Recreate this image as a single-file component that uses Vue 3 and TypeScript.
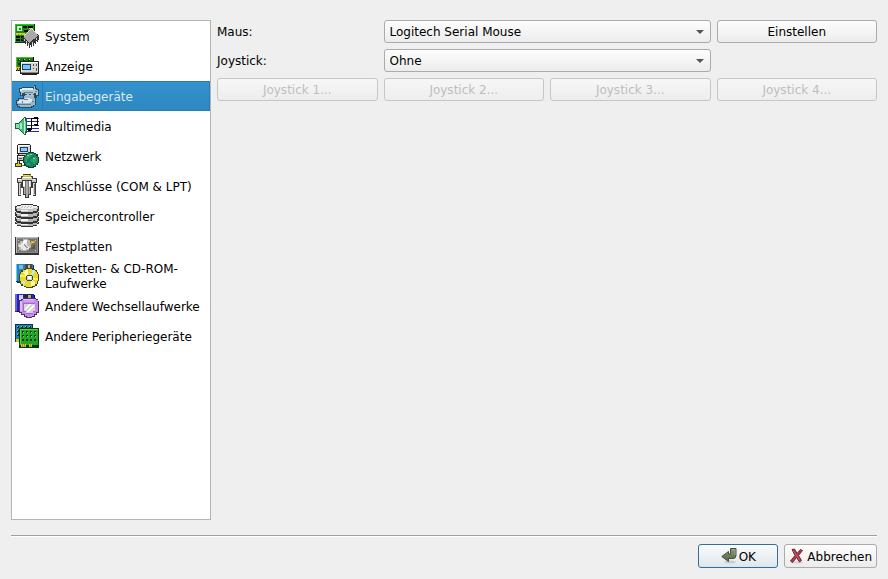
<script setup lang="ts">
import { ref } from 'vue'

interface Shape {
  d: string
  fill?: string
  stroke?: string
  width?: number
}

interface Category {
  name: string
  shapes: Shape[]
}

const categories: Category[] = [
  {
    name: 'System',
    shapes: [
      { d: 'M0 0H20V19H0Z', fill: '#073d07' },
      { d: 'M0 0H19V18H0Z', fill: '#149014' },
      { d: 'M0 0H19V1H1V18H0Z', fill: '#27c927' },
      { d: 'M8 2H12V4H8ZM13 2H18V4H13ZM9 6H13V8H9ZM1 12H5V14H1ZM6 12H10V14H6ZM1 15H5V17H1ZM6 15H10V17H6Z', fill: '#000' },
      { d: 'M2 2H7V7H2Z', fill: '#d4e6d4' },
      { d: 'M4 4H6V6H4Z', fill: '#149014' },
      { d: 'M1 9H10V11H1ZM14 4H18V5H14Z', fill: '#e5c51c' },
      { d: 'M3 10H4V11H3ZM6 10H7V11H6Z', fill: '#c87b00' },
      { d: 'M7 13L16 4L24 12V16L15 21L7 16Z', fill: '#333' },
      { d: 'M8 13L16 5L23 12L14 19Z', fill: '#a9a9a9' },
      { d: 'M8.5 12.5L16.5 4.5L22.5 10.5', stroke: '#dedede' },
      { d: 'M8.5 15V18M10.5 16V20M12.5 18V22M14.5 19V24M16.5 18V23M18.5 17V22M20.5 15V20M22.5 13V18', stroke: '#333' },
      { d: 'M9.5 15V17M11.5 17V19M13.5 19V21M17.5 18V20M21.5 14V16', stroke: '#ccc' },
    ],
  },
  {
    name: 'Anzeige',
    shapes: [
      { d: 'M1 3H19V17H1Z', fill: '#000' },
      { d: 'M1 3H18V15H1Z', fill: '#13821a' },
      { d: 'M1 3H18V4H2V15H1Z', fill: '#5cb92f' },
      { d: 'M3 5H5V7H3ZM8 5H10V7H8ZM13 5H15V7H13ZM3 9H5V11H3Z', fill: '#0b3b0b' },
      { d: 'M4 5H5V6H4ZM9 5H10V6H9ZM14 5H15V6H14Z', fill: '#c7dd70' },
      { d: 'M1 13H6V16H1Z', fill: '#e1ca24' },
      { d: 'M2 14V17M4 14V17', stroke: '#5c5600' },
      { d: 'M5 7H24V20H22V21H7V20H5Z', fill: '#222' },
      { d: 'M6 8H23V18H6Z', fill: '#d5d6d0' },
      { d: 'M6 8H23V9H7V18H6Z', fill: '#fff' },
      { d: 'M7 10H16V16H7Z', fill: '#17436a' },
      { d: 'M8 11H15V15H8Z', fill: '#78c5ff' },
      { d: 'M18 10H19V12H18ZM21 10H22V12H21ZM18 14H19V15H18ZM21 14H22V17H21Z', fill: '#555' },
      { d: 'M6 18H23V19H6Z', fill: '#888' },
    ],
  },
  {
    name: 'Eingabegeräte',
    shapes: [
      { d: 'M4 4H7V3H19V1H21V4H22V5H24V12H22V14H21V21H19V23H17V24H4V23H2V21H1V16H3V14H8V12H5V9H4Z', fill: '#2b4a5e' },
      { d: 'M5 5H19V2H20V5H21V6H23V11H21V9H19V12H10V9H7V11H6V8H5Z', fill: '#a8c4d1' },
      { d: 'M7 4H18V6H7ZM5 5H7V7H5Z', fill: '#e3eff2' },
      { d: 'M9 8H18V9H9ZM20 7H22V8H20Z', fill: '#6a8799' },
      { d: 'M9 12H19V14H20V21H18V22H16V23H5V22H3V20H2V17H4V15H9Z', fill: '#9bb9c8' },
      { d: 'M4 16H10V14H15V15H17V18H15V19H3V17H4Z', fill: '#dbe8ec' },
      { d: 'M9 15H13V16H9ZM7 17H8V19H7ZM3 20H16V21H3ZM17 17H19V18H17Z', fill: '#617f92' },
      { d: 'M10 10H12V11H10ZM14 10H16V11H14ZM18 10H19V11H18Z', fill: '#3b596b' },
    ],
  },
  {
    name: 'Multimedia',
    shapes: [
      { d: 'M11 4.5H24M11 7.5H24M11 11.5H24M11 14.5H24M11 17.5H24', stroke: '#2824c8' },
      { d: 'M0 9H3L9 3H11V5H12V19H11V21H9L3 15H0Z', fill: '#17643b' },
      { d: 'M1 10H4V14H1Z', fill: '#84e4ac' },
      { d: 'M4 9L9 4V20L4 15Z', fill: '#40bd78' },
      { d: 'M5 9H7V15H5Z', fill: '#a9efc6' },
      { d: 'M9 4H10V20H9Z', fill: '#d9ece0' },
      { d: 'M10 7H11V17H10Z', fill: '#68cc93' },
      { d: 'M16 4H19V3H23V12H20V11H19V10H22V5H17V16H16V17H13V16H12V15H13V14H16Z', fill: '#000' },
    ],
  },
  {
    name: 'Netzwerk',
    shapes: [
      { d: 'M3 0H15V1H16V10H15V11H14V17H2V11H3V10H2V1H3Z', fill: '#222' },
      { d: 'M3 1H15V9H3Z', fill: '#d8d8d0' },
      { d: 'M3 1H15V2H4V9H3Z', fill: '#fff' },
      { d: 'M5 3H13V8H5Z', fill: '#17436a' },
      { d: 'M6 4H12V7H6Z', fill: '#8fcbfa' },
      { d: 'M4 10H13V11H4ZM3 12H13V16H3Z', fill: '#c6c6bf' },
      { d: 'M3 12H12V13H3Z', fill: '#fff' },
      { d: 'M4 14H7V15H4Z', fill: '#555' },
      { d: 'M2 17H5V19H7V23H0V19H2Z', fill: '#333' },
      { d: 'M1 20H6V22H1ZM3 17H4V20H3Z', fill: '#d6ca22' },
      { d: 'M7 21H11V22H7Z', fill: '#777' },
      { d: 'M13 8H19V9H21V10H23V13H24V19H23V21H21V23H19V24H13V23H11V22H9V19H8V13H9V11H11V9H13Z', fill: '#123e2c' },
      { d: 'M13 9H19V10H21V12H22V13H23V19H22V21H20V22H18V23H14V22H11V20H10V18H9V13H10V11H12V10H13Z', fill: '#15806c' },
      { d: 'M12 10H18V11H16V13H14V15H12V18H10V14H11V12H12ZM18 13H21V14H22V18H20V20H18V18H16V15H18ZM12 19H15V21H12Z', fill: '#25a55a' },
      { d: 'M12 11H14V12H12ZM18 14H20V15H18ZM15 10H17V11H15Z', fill: '#8bd98c' },
    ],
  },
  {
    name: 'Anschlüsse (COM & LPT)',
    shapes: [
      { d: 'M8 0H16V2H18V4H22V9H21V22H18V14H16V21H14V24H10V21H8V14H6V22H3V9H2V4H6V2H8Z', fill: '#3b3b3b' },
      { d: 'M8 1H16V3H8Z', fill: '#c7b928' },
      { d: 'M9 1H14V2H9Z', fill: '#eee24b' },
      { d: 'M3 5H7V3H17V5H21V8H17V6H7V8H3Z', fill: '#c8c8c1' },
      { d: 'M8 3H16V4H8ZM3 5H6V6H3ZM18 5H20V6H18Z', fill: '#fff' },
      { d: 'M4 9H6V21H4ZM18 9H20V21H18ZM8 7H16V13H8Z', fill: '#d8d8d2' },
      { d: 'M9 13H11V20H9ZM13 13H15V20H13ZM11 7H13V23H11Z', fill: '#aeaea8' },
      { d: 'M10 7H11V20H10ZM13 7H14V20H13ZM5 10H6V20H5ZM19 10H20V20H19Z', fill: '#777' },
      { d: 'M8 7H10V12H8ZM14 7H15V12H14Z', fill: '#fff' },
    ],
  },
  {
    name: 'Speichercontroller',
    shapes: [
      { d: 'M6 0H18V1H22V2H24V20H22V22H18V23H6V22H2V20H0V2H2V1H6Z', fill: '#333' },
      { d: 'M6 1H18V2H22V3H23V5H22V7H18V8H6V7H2V5H1V3H2V2H6Z', fill: '#c4c4c4' },
      { d: 'M1 8H2V9H6V10H18V9H22V8H23V10H22V12H18V13H6V12H2V10H1ZM1 13H2V14H6V15H18V14H22V13H23V15H22V17H18V18H6V17H2V15H1ZM1 18H2V19H6V20H18V19H22V18H23V19H22V21H18V22H6V21H2V19H1Z', fill: '#b4b4b4' },
      { d: 'M6 1H18V2H22V4H18V5H6V4H2V2H6Z', fill: '#eee' },
      { d: 'M6 10H13V12H6ZM6 15H13V17H6ZM6 20H13V21H6ZM6 6H13V7H6ZM2 9H4V10H2ZM2 14H4V15H2Z', fill: '#f4f4f4' },
      { d: 'M7 2H8V3H7ZM10 2H11V3H10ZM13 2H14V3H13ZM16 2H17V3H16ZM6 3H7V4H6ZM9 3H10V4H9ZM12 3H13V4H12ZM15 3H16V4H15Z', fill: '#bbb' },
      { d: 'M0 7H1V8H0ZM23 7H24V8H23ZM0 12H1V13H0ZM23 12H24V13H23ZM0 17H1V18H0ZM23 17H24V18H23Z', fill: '#fff' },
    ],
  },
  {
    name: 'Festplatten',
    shapes: [
      { d: 'M0 3H24V21H0Z', fill: '#333' },
      { d: 'M1 3H23V19H1Z', fill: '#8d8d87' },
      { d: 'M1 3H23V4H2V19H1Z', fill: '#bbb' },
      { d: 'M2 5H22V18H2Z', fill: '#77736f' },
      { d: 'M8 5H13V6H15V8H16V14H14V16H12V17H6V16H4V13H3V9H5V7H8Z', fill: '#b8b9b6' },
      { d: 'M4 11H6V9H9V8H12V12H14V15H11V16H8V15H6V13H4Z', fill: '#e9e9e8' },
      { d: 'M9 6H12V8H10V9H8V7H9Z', fill: '#fff' },
      { d: 'M9 10H10V11H11V12H12V13H13V14H11V13H10V12H9Z', fill: '#999' },
      { d: 'M15 8H16V7H20V9H17V10H15Z', fill: '#dba42b' },
      { d: 'M17 8H18V9H17Z', fill: '#ffe176' },
      { d: 'M3 6H4V7H3ZM20 6H21V7H20ZM3 16H4V17H3ZM20 16H21V17H20Z', fill: '#cacac3' },
      { d: 'M18 11H20V15H16V13H18Z', fill: '#5d5853' },
    ],
  },
  {
    name: 'Disketten- & CD-ROM-Laufwerke',
    shapes: [
      { d: 'M1 1H19V19H2V18H1Z', fill: '#12395c' },
      { d: 'M1 0H18V17H1Z', fill: '#2385bb' },
      { d: 'M1 0H2V17H1Z', fill: '#66cdf0' },
      { d: 'M4 1H8V5H4Z', fill: '#7fb6d0' },
      { d: 'M10 0H17V5H10Z', fill: '#494949' },
      { d: 'M13 1H15V4H13Z', fill: '#b9b9b9' },
      { d: 'M11 4H18V5H20V6H22V8H23V10H24V17H23V20H22V22H20V23H18V24H11V23H9V22H6V20H5V18H4V10H5V8H6V6H9V5H11Z', fill: '#4b4510' },
      { d: 'M11 5H17V6H20V7H21V8H22V10H23V17H22V20H20V22H17V23H11V22H8V20H6V17H5V10H6V8H8V6H11Z', fill: '#e5d92c' },
      { d: 'M8 8H10V6H13V11H12V12H11ZM17 16L21 19H20V21H18V22H16V17Z', fill: '#fffbb5' },
      { d: 'M17 6H19V7H20V8L17 12H16ZM6 18L11 16L9 21H8V19H6Z', fill: '#bdeaf0' },
      { d: 'M5 11H11V13H5ZM18 14H23V16H18Z', fill: '#f8f25c' },
      { d: 'M12 11H17V12H18V16H17V17H12V16H11V12H12Z', fill: '#444' },
      { d: 'M12 12H17V16H12Z', fill: '#d1d1d1' },
      { d: 'M13 12H16V15H13Z', fill: '#fff' },
    ],
  },
  {
    name: 'Andere Wechsellaufwerke',
    shapes: [
      { d: 'M1 1H20V18H1Z', fill: '#080850' },
      { d: 'M0 0H19V17H2V18H0Z', fill: '#2523c8' },
      { d: 'M0 0H2V17H0Z', fill: '#6864e0' },
      { d: 'M4 1H8V6H4Z', fill: '#d4d4fc' },
      { d: 'M9 0H17V5H9Z', fill: '#282834' },
      { d: 'M13 1H16V4H13Z', fill: '#aaa' },
      { d: 'M8 4H21V5H23V7H24V19H22V21H20V23H17V24H11V23H9V21H6V19H4V7H6V5H8Z', fill: '#513169' },
      { d: 'M8 5H21V6H23V18H21V20H19V22H17V23H12V22H10V20H7V18H5V7H7V6H8Z', fill: '#c58bea' },
      { d: 'M5 7H7V17H5ZM8 5H19V6H8Z', fill: '#e3bdf9' },
      { d: 'M8 9H20V18H18V20H11V18H8Z', fill: '#a569c8' },
      { d: 'M9 10H20V17H18V19H11V17H9Z', fill: '#d5d5d5' },
      { d: 'M10 14L14 10H16L10 16ZM11 18L19 10V12L13 18Z', fill: '#fff' },
      { d: 'M9 6H19V8H9Z', fill: '#d3a0f0' },
    ],
  },
  {
    name: 'Andere Peripheriegeräte',
    shapes: [
      { d: 'M0 0H18V18H0Z', fill: '#073851' },
      { d: 'M1 1H17V16H1Z', fill: '#1b84b3' },
      { d: 'M2 2H4V4H2ZM6 2H8V4H6ZM10 2H12V4H10ZM14 2H16V4H14ZM2 6H4V8H2ZM2 10H4V12H2Z', fill: '#042c3d' },
      { d: 'M2 2H3V3H2ZM6 2H7V3H6ZM10 2H11V3H10ZM14 2H15V3H14ZM2 6H3V7H2ZM2 10H3V11H2Z', fill: '#69c9e5' },
      { d: 'M1 15H5V18H1Z', fill: '#dfbd2c' },
      { d: 'M4 4H24V24H4Z', fill: '#083b0b' },
      { d: 'M5 5H23V21H5Z', fill: '#22a626' },
      { d: 'M5 5H23V6H6V21H5Z', fill: '#5fd32d' },
      { d: 'M7 7H9V9H7ZM11 7H13V9H11ZM15 7H17V9H15ZM19 7H21V9H19ZM7 11H9V13H7ZM11 11H13V13H11ZM15 11H17V13H15ZM19 11H21V13H19ZM7 15H9V17H7ZM11 15H13V17H11ZM15 15H17V17H15ZM19 15H21V17H19Z', fill: '#053f08' },
      { d: 'M8 8H9V9H8ZM12 8H13V9H12ZM16 8H17V9H16ZM20 8H21V9H20ZM8 12H9V13H8ZM12 12H13V13H12ZM16 12H17V13H16ZM20 12H21V13H20Z', fill: '#99c69b' },
      { d: 'M6 20H11V23H6ZM14 20H17V23H14Z', fill: '#dfbd2c' },
      { d: 'M7.5 20V23M9.5 20V23M15.5 20V23', stroke: '#8f9614' },
    ],
  },
]

const current = ref('Eingabegeräte')
const mouse = ref('Logitech Serial Mouse')
const joystick = ref('Ohne')
</script>

<template>
  <form class="dialog" @submit.prevent>
    <div class="content">
      <nav class="categories">
        <button
          v-for="category in categories"
          :key="category.name"
          type="button"
          class="category"
          :class="{ selected: category.name === current }"
          :aria-current="category.name === current ? 'page' : undefined"
          @click="current = category.name"
        >
          <svg class="category-icon" viewBox="0 0 24 24" shape-rendering="crispEdges" aria-hidden="true">
            <path
              v-for="(shape, i) in category.shapes"
              :key="i"
              :d="shape.d"
              :fill="shape.fill ?? 'none'"
              :stroke="shape.stroke ?? 'none'"
              :stroke-width="shape.width ?? 1"
            />
          </svg>
          <span class="category-name">{{ category.name }}</span>
        </button>
      </nav>

      <section class="settings">
        <label for="mouse">Maus:</label>
        <div class="combo">
          <select id="mouse" v-model="mouse">
            <option>Logitech Serial Mouse</option>
          </select>
        </div>
        <button type="button" class="control">Einstellen</button>

        <label for="joystick" class="row-start">Joystick:</label>
        <div class="combo">
          <select id="joystick" v-model="joystick">
            <option>Ohne</option>
          </select>
        </div>

        <button
          v-for="n in 4"
          :key="n"
          type="button"
          class="control"
          :class="{ 'row-start': n === 1 }"
          disabled
        >
          Joystick {{ n }}...
        </button>
      </section>
    </div>

    <footer class="actions">
      <button type="submit" class="control action default">
        <svg class="action-icon" viewBox="0 0 16 16" aria-hidden="true">
          <defs>
            <linearGradient id="ok-fill" x1="0" y1="0" x2="0" y2="1">
              <stop offset="0" stop-color="#8b9a7c" />
              <stop offset="1" stop-color="#566349" />
            </linearGradient>
          </defs>
          <ellipse cx="9" cy="14" rx="6" ry="1.5" fill="#000" opacity=".13" />
          <path d="M9.500 .5H15V7.500Q15 10.500 12 10.500H7.500V13.500L.8 8.500L7.500 3.500V6H9.500Z" fill="url(#ok-fill)" stroke="#43503a" stroke-linejoin="round" />
          <path d="M10.500 1.500H14V7" fill="none" stroke="#a6b19a" opacity=".7" />
        </svg>
        <span>OK</span>
      </button>
      <button type="button" class="control action">
        <svg class="action-icon" viewBox="0 0 16 16" aria-hidden="true">
          <ellipse cx="8" cy="14.500" rx="6" ry="1" fill="#000" opacity=".12" />
          <path d="M3 1.500L5.500 1L8 5.500L11.500 1.500L13.500 2.500L9.500 7.500L12.500 12.500L10.500 14L7.500 9.500L3.500 14.500L1.500 13L6 7.500Z" fill="#b23c48" stroke="#6d2530" stroke-linejoin="round" />
          <path d="M4 2.500L11 12.500" stroke="#d37b82" opacity=".6" />
        </svg>
        <span>Abbrechen</span>
      </button>
    </footer>
  </form>
</template>

<style>
body {
  margin: 0;
  background: #efefef;
}
</style>

<style scoped>
.dialog {
  box-sizing: border-box;
  display: flex;
  flex-direction: column;
  min-height: 100vh;
  padding: 20px 11px 11px;
  background: #efefef;
  color: #000;
  font: 12px/15px "DejaVu Sans", sans-serif;
}

.content {
  display: grid;
  grid-template-columns: 200px 1fr;
  gap: 6px;
  flex: 1;
}

.categories {
  display: flex;
  flex-direction: column;
  border: 1px solid #b4b4b4;
  background: #fff;
}

.category {
  display: flex;
  align-items: center;
  gap: 3px;
  height: 30px;
  padding: 0 0 0 3px;
  border: 0;
  background: none;
  color: inherit;
  font: inherit;
  text-align: left;
}

.category-icon {
  flex: none;
  width: 24px;
  height: 24px;
}

.category-name {
  box-sizing: border-box;
  display: flex;
  flex: 1;
  align-items: center;
  height: 30px;
  padding: 2px 3px 0;
}

.selected {
  background: linear-gradient(#3492ce, #2e88c1);
  box-shadow: inset 0 1px #2a7db2, inset 0 -1px #2a7db2;
  color: #d8e9f4;
}

.selected .category-name {
  box-shadow: inset 0 0 0 1px #2a7db2;
}

.settings {
  display: grid;
  grid-template-columns: repeat(4, 1fr);
  align-content: start;
  align-items: center;
  gap: 6px;
}

.settings label {
  padding-top: 2px;
}

.row-start {
  grid-column-start: 1;
}

.combo {
  position: relative;
  display: grid;
  grid-column: span 2;
}

.combo::after {
  content: "";
  position: absolute;
  top: 10px;
  right: 7px;
  border: 4px solid transparent;
  border-top-color: #555;
  border-bottom-width: 0;
  pointer-events: none;
}

.control,
select {
  box-sizing: border-box;
  height: 23px;
  margin: 0;
  border: 1px solid #ababab;
  border-radius: 3px;
  background: linear-gradient(#fdfdfd, #ececec);
  color: #000;
  font: inherit;
}

.control {
  padding: 2px 4px 0;
}

.control:disabled {
  border-color: #c6c6c6;
  background: linear-gradient(#f7f7f7, #ededed);
  color: #bebebe;
}

select {
  width: 100%;
  padding: 2px 20px 0 5px;
  appearance: none;
}

.actions {
  display: flex;
  justify-content: flex-end;
  gap: 6px;
  margin-top: 15px;
  padding-top: 8px;
  border-top: 1px solid #a0a0a0;
  box-shadow: inset 0 1px #fff;
}

.action {
  display: flex;
  align-items: center;
  justify-content: center;
  gap: 2px;
  min-width: 80px;
  height: 24px;
  padding: 0 4px;
}

.action span {
  padding-top: 2px;
}

.default {
  border-color: #2f6f9b;
  background: linear-gradient(#fafcfd, #dfe6eb);
}

.action-icon {
  width: 16px;
  height: 16px;
}
</style>
